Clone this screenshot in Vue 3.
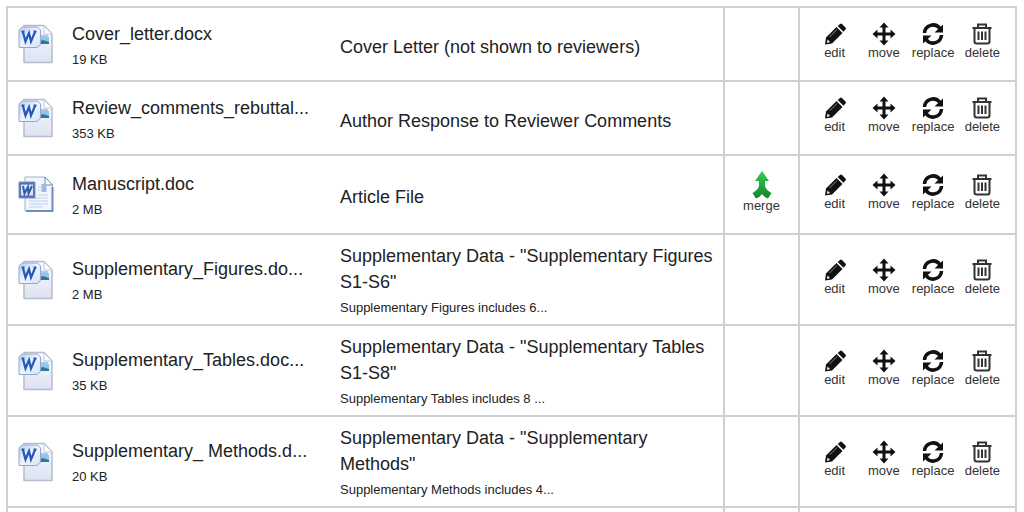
<script setup>
const files = [
  { name: 'Cover_letter.docx', size: '19 KB', kind: 'docx', title: 'Cover Letter (not shown to reviewers)' },
  { name: 'Review_comments_rebuttal...', size: '353 KB', kind: 'docx', title: 'Author Response to Reviewer Comments' },
  { name: 'Manuscript.doc', size: '2 MB', kind: 'doc', title: 'Article File', merge: true },
  { name: 'Supplementary_Figures.do...', size: '2 MB', kind: 'docx', title: 'Supplementary Data - "Supplementary Figures S1-S6"', note: 'Supplementary Figures includes 6...' },
  { name: 'Supplementary_Tables.doc...', size: '35 KB', kind: 'docx', title: 'Supplementary Data - "Supplementary Tables S1-S8"', note: 'Supplementary Tables includes 8 ...' },
  { name: 'Supplementary_ Methods.d...', size: '20 KB', kind: 'docx', title: 'Supplementary Data - "Supplementary Methods"', note: 'Supplementary Methods includes 4...' }
]
const actions = ['edit', 'move', 'replace', 'delete']
</script>

<template>
  <main class="page">
    <svg class="defs" aria-hidden="true">
      <defs>
        <linearGradient id="paper" x1="0" y1="0" x2="0" y2="1">
          <stop offset="0" stop-color="#fafbfe" /><stop offset="1" stop-color="#dde2f2" />
        </linearGradient>
        <linearGradient id="badge" x1="0" y1="0" x2="1" y2="1">
          <stop offset="0" stop-color="#b9cdf0" /><stop offset=".5" stop-color="#edf4ff" /><stop offset="1" stop-color="#d3e2f7" />
        </linearGradient>
        <linearGradient id="leaf" x1="0" y1="0" x2="0" y2="1">
          <stop offset="0" stop-color="#2fd052" /><stop offset="1" stop-color="#16832b" />
        </linearGradient>
      </defs>
    </svg>
    <table class="files">
      <colgroup>
        <col class="c-icon"><col class="c-name"><col><col class="c-merge"><col class="c-actions">
      </colgroup>
      <tbody>
        <tr v-for="f in files" :key="f.name" :class="{ tall: f.merge }">
          <td class="icon">
            <svg v-if="f.kind === 'docx'" width="36" height="40" viewBox="0 0 36 40">
              <path d="M6 1.500H26L34 10V38.500H6Z" fill="url(#paper)" stroke="#b6bccd" stroke-width="1.500" stroke-linejoin="round" />
              <path d="M26 2V10H34Z" fill="#fff" stroke="#c3c8d6" stroke-linejoin="round" />
              <path d="M20 12H30" stroke="#a9c8ea" stroke-width="2" />
              <path d="M20 13H31V19H20Z" fill="#8fc6ee" />
              <path d="M20 18L25 16L31 18V20H20Z" fill="#2e7893" />
              <path d="M4 3H19.500L22.500 6V20.500L19 23.500H1V6Z" fill="url(#badge)" stroke="#94a9d1" stroke-linejoin="round" />
              <path d="M3.500 7.500H6.500M15.500 7.500H18.500M5 8L7.500 17.500L11 9L13 17.500L17 8" fill="none" stroke="#2457b8" stroke-width="2.200" />
            </svg>
            <svg v-else width="36" height="38" viewBox="0 0 36 38">
              <path d="M7 1H27L34.500 9V35H7Z" fill="#f1f5fe" stroke="#9fb1d4" stroke-linejoin="round" />
              <path d="M34.500 11V35H8" fill="none" stroke="#718cc0" stroke-width="2" />
              <path d="M27 1V9H34.500Z" fill="#fff" stroke="#75849f" stroke-linejoin="round" />
              <path d="M23.500 8H28.500V16H23.500Z" fill="#9cb7e8" />
              <path d="M20 11H23M20 14H23M20 19H30M11 22H30M11 25H30M11 28H30M11 31H25" stroke="#c2d1ee" />
              <path d="M1 6H17V22H1Z" fill="#526fae" stroke="#8094c2" />
              <path d="M3 8.500H15V19.500H3Z" fill="#dce5f8" />
              <path d="M5 10L6.500 17.500L10 11L10.500 17.500L14 10" fill="none" stroke="#3359a8" stroke-width="2" />
            </svg>
          </td>
          <td class="text">
            <div class="main">{{ f.name }}</div>
            <div class="small">{{ f.size }}</div>
          </td>
          <td class="text">
            <div class="main">{{ f.title }}</div>
            <div v-if="f.note" class="small">{{ f.note }}</div>
          </td>
          <td class="ruled">
            <button v-if="f.merge" type="button" class="act merge">
              <svg width="24" height="28" viewBox="0 0 24 28">
                <path d="M12 0L19 10H15V14C15 17 17 19 21.500 22L18 27.500Q14 26 12 23Q10 26 6 27.500L2.500 22C7 19 9 17 9 14V10H5Z" fill="url(#leaf)" />
              </svg>
              <span>merge</span>
            </button>
          </td>
          <td class="ruled">
            <div class="actions">
              <button v-for="a in actions" :key="a" type="button" class="act">
                <svg width="24" height="24" viewBox="0 0 24 24">
                  <g v-if="a === 'edit'" fill="#111">
                    <path d="M2 22.500L3 15.500L13.500 5L19.500 11L9 21.500Z" />
                    <path d="M14.700 4L17 2Q18 1 19 2L22.500 5.500Q23.500 6.500 22.500 7.500L20.400 9.800Z" />
                    <path d="M6.500 15L14 7.500" stroke="#888" />
                    <path d="M4.500 17.500L7 20L4 21Z" fill="#fff" />
                  </g>
                  <g v-else-if="a === 'move'" fill="#111">
                    <path d="M12 3V21M3 12H21" stroke="#111" stroke-width="3" />
                    <path d="M12 .5L16.500 5.500H7.500ZM12 23.500L7.500 18.500H16.500ZM.5 12L5.500 7.500V16.500ZM23.500 12L18.500 16.500V7.500Z" />
                  </g>
                  <g v-else-if="a === 'replace'">
                    <path d="M3.500 11C4 3 14 0 19 6.500M20.500 13C20 21 10 24 5 17.500" fill="none" stroke="#111" stroke-width="3.500" />
                    <path d="M22 2.500V10.500H13.500ZM2 21.500V13.500H10.500Z" fill="#111" />
                  </g>
                  <g v-else fill="none" stroke="#333" stroke-width="2">
                    <path d="M2.500 6H21.500M8 5.500V2.500H16V5.500M4.500 7V19.500Q4.500 21.500 6.500 21.500H17.500Q19.500 21.500 19.500 19.500V7" />
                    <path d="M8.500 9.500V18M12 9.500V18M15.500 9.500V18" />
                  </g>
                </svg>
                <span>{{ a }}</span>
              </button>
            </div>
          </td>
        </tr>
        <tr><td></td><td></td><td></td><td class="ruled"></td><td class="ruled"></td></tr>
      </tbody>
    </table>
  </main>
</template>

<style>
body { margin: 0; background: #fff; }
</style>

<style scoped>
.page {
  box-sizing: border-box;
  height: 100vh;
  overflow: hidden;
  padding: 6px 7px 0 6px;
  font-family: "Liberation Sans", Arial, sans-serif;
  color: #222;
}
.defs { position: absolute; width: 0; height: 0; }
.files {
  width: 100%;
  table-layout: fixed;
  border-collapse: collapse;
  border: 2px solid #d0d0d0;
}
.c-icon { width: 65px; }
.c-name { width: 268px; }
.c-merge { width: 75px; }
.c-actions { width: 217px; }
td {
  box-sizing: border-box;
  height: 74px;
  padding: 0;
  border-bottom: 2px solid #d0d0d0;
  vertical-align: middle;
}
.tall td { height: 79px; }
td.ruled { padding-bottom: 5px; border-left: 2px solid #d0d0d0; }
.icon { padding-left: 10px; }
.icon svg { display: block; }
td.text { padding: 8px 8px 3px 0; }
.main { font-size: 18px; line-height: 26px; }
.small { font-size: 13px; line-height: 26px; }
.actions {
  display: grid;
  grid-template-columns: repeat(4, 1fr);
  padding: 0 8px 0 10px;
}
.act {
  display: flex;
  flex-direction: column;
  align-items: center;
  padding: 0;
  border: 0;
  background: none;
  color: #333;
  font-family: inherit;
  font-size: 13px;
  line-height: 16px;
  cursor: pointer;
}
.act svg { display: block; }
.act span { margin-top: -1px; }
.merge { width: 100%; }
</style>
